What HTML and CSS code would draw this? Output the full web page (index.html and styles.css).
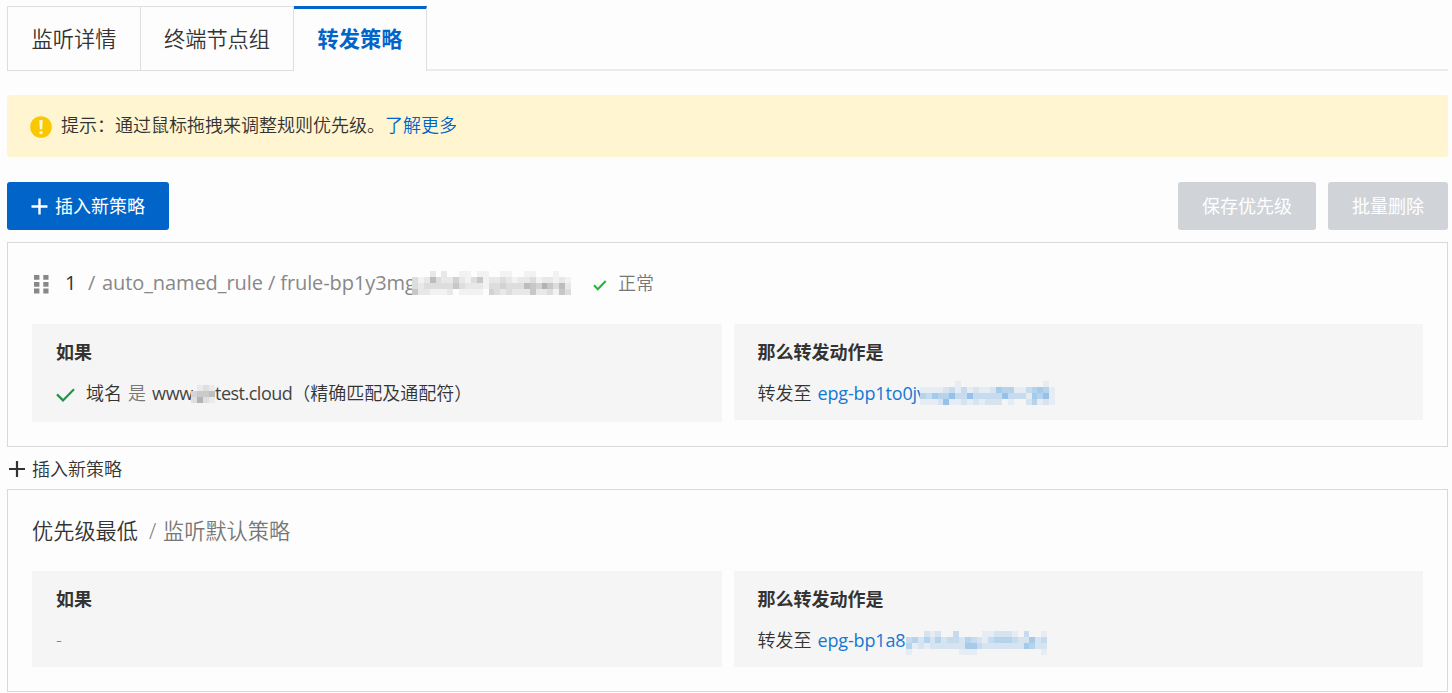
FILE: index.html
```html
<!DOCTYPE html>
<html lang="zh-CN">
<head>
<meta charset="utf-8">
<title>转发策略</title>
<link rel="stylesheet" href="styles.css">
</head>
<body>
<nav class="tabs">
  <a class="tab tab-first">监听详情</a>
  <a class="tab">终端节点组</a>
  <a class="tab tab-active">转发策略</a>
  <span class="tabs-rest"></span>
</nav>

<div class="notice">
  <svg class="notice-icon" width="22" height="22" viewBox="0 0 22 22"><circle cx="11" cy="11" r="10.8" fill="#fac800"/><path d="M9.3 4h3.4l-.5 9.2H9.8z" fill="#fff8dc"/><circle cx="11" cy="16.6" r="1.7" fill="#fff8dc"/></svg>
  <span>提示：通过鼠标拖拽来调整规则优先级。</span><a class="notice-link">了解更多</a>
</div>

<div class="toolbar">
  <button class="btn btn-primary"><svg width="17" height="17" viewBox="0 0 17 17"><path d="M8.5.5v16M.5 8.5h16" stroke="#fff" stroke-width="2.4"/></svg><span>插入新策略</span></button>
  <div class="toolbar-right">
    <button class="btn btn-off">保存优先级</button>
    <button class="btn btn-off">批量删除</button>
  </div>
</div>

<section class="card card-rule">
  <header class="card-head rule-head">
    <svg class="grip" width="15" height="19" viewBox="0 0 15 19" fill="#888"><path d="M0 0h5.4v4.8H0zM9.3 0h5.2v4.8H9.3zM0 7h5.4v4.8H0zM9.3 7h5.2v4.8H9.3zM0 13.6h5.4v4.8H0zM9.3 13.6h5.2v4.8H9.3z"/></svg>
    <span class="order">1</span>
    <span class="slash">/</span>
    <span class="rule-name">auto_named_rule / frule-bp1y3mg</span>
    <svg class="mosaic mosaic-rule" width="159" height="24" data-ink="110,110,110" data-paper="253" data-rows="000202001101100110011000100 312632242135122321223122121 323333353222133433365475362 522111201111043232225223153"></svg>
    <svg class="status-icon" width="14" height="11" viewBox="0 0 14 11"><path d="M1 5.2l3.8 4L12.7 1" fill="none" stroke="#1fb83a" stroke-width="2"/></svg>
    <span class="status">正常</span>
  </header>
  <div class="panels">
    <div class="panel panel-tall">
      <h3>如果</h3>
      <div class="line">
        <svg class="check" width="19" height="14" viewBox="0 0 19 14"><path d="M1 6.4l6 6L18 1.3" fill="none" stroke="#239447" stroke-width="2.2"/></svg>
        <span class="domain">域名</span><span class="is">是</span><span class="latin www">www</span><svg class="mosaic mosaic-domain" width="24" height="18" data-ink="100,100,100" data-paper="245" data-rows="0121 3445 2621"></svg><span class="latin test">test.cloud</span><span>（精确匹配及通配符）</span>
      </div>
    </div>
    <div class="panel">
      <h3>那么转发动作是</h3>
      <div class="line"><span>转发至</span><a class="target target-one">epg-bp1to0jv</a><svg class="mosaic mosaic-one" width="135" height="24" data-ink="35,130,215" data-paper="245" data-rows="00000010000000000000010 11112313121125441134541 43544633633333633315461 11126112121222010024121"></svg></div>
    </div>
  </div>
</section>

<div class="insert">
  <svg width="16" height="16" viewBox="0 0 16 16"><path d="M8 0v16M0 8h16" stroke="#333" stroke-width="2.2"/></svg>
  <span>插入新策略</span>
</div>

<section class="card card-default">
  <header class="card-head">
    <span class="lowest">优先级最低</span>
    <span class="default-slash">/</span>
    <span class="default-name">监听默认策略</span>
  </header>
  <div class="panels">
    <div class="panel">
      <h3>如果</h3>
      <div class="line"><span class="dash">-</span></div>
    </div>
    <div class="panel">
      <h3>那么转发动作是</h3>
      <div class="line"><span>转发至</span><a class="target target-two">epg-bp1a8</a><svg class="mosaic mosaic-two" width="141" height="24" data-ink="35,130,215" data-paper="245" data-rows="000212003000011222103001 342424233243213444322523 412122222255322222225422 100000000111000000000001"></svg></div>
    </div>
  </div>
</section>
<script src="mosaic.js"></script>
</body>
</html>
```
FILE: styles.css
```css
* { box-sizing: border-box; }
body {
  margin: 0;
  padding: 6px 4px 0 7px;
  background: #fdfdfd;
  color: #333;
  font: 350 18px/24px "Open Sans", "Noto Sans CJK SC", sans-serif;
  overflow: hidden;
}
.tabs { display: flex; height: 65px; font-size: 21.2px; }
.tab {
  width: 153px;
  border: 1px solid #dedede;
  border-left: 0;
  text-align: center;
  line-height: 64px;
}
.tab-first { width: 134px; border-left: 1px solid #dedede; }
.tab-active {
  width: 133px;
  border-top: 3px solid #0064c8;
  border-bottom: 0;
  color: #0064c8;
  font-weight: 700;
  line-height: 60px;
}
.tabs-rest { flex: 1; height: 65px; border-bottom: 2px solid #ebebeb; }
.notice {
  display: flex;
  align-items: center;
  height: 62px;
  margin-top: 24px;
  padding: 0 0 2px 23px;
  background: #fff5d0;
  border-radius: 3px;
}
.notice-icon { margin: 4px 9px 0 0; }
.notice-link { color: #0064c8; }
.toolbar {
  display: flex;
  justify-content: space-between;
  margin-top: 25px;
}
.toolbar-right { display: flex; gap: 12px; }
.btn {
  display: flex;
  align-items: center;
  height: 48px;
  padding: 0 24px;
  border: 0;
  border-radius: 3px;
  font: inherit;
  color: #fff;
}
.btn-primary { gap: 7px; background: #0064c8; font-weight: 400; }
.btn-off { background: #d0d4d9; font-weight: 400; }
.card { border: 1px solid #d9d9d9; padding: 0 24px; }
.card-rule { height: 205px; margin-top: 12px; }
.card-default { height: 203px; }
.card-head { display: flex; align-items: center; height: 81px; white-space: nowrap; }
.rule-head { padding-bottom: 2px; }
.grip { margin: 4px 16px 0 2px; }
.order { width: 23px; font-size: 20px; font-weight: 400; }
.slash { width: 14px; color: #888; font-size: 20px; font-weight: 400; }
.rule-name {
  width: 310px;
  color: #888;
  font-size: 20px;
  font-weight: 400;
  letter-spacing: -0.09px;
}
.status-icon { margin: 5px 11px 0 22px; }
.status { color: #777; }
.panels { display: flex; gap: 12px; align-items: flex-start; }
.panel { flex: 1; height: 96px; padding: 16px 24px 0; background: #f5f5f5; }
.panel-tall { height: 98px; }
.panel h3 { margin: 0; font-size: 18px; font-weight: 700; line-height: 24px; }
.line { display: flex; align-items: center; height: 24px; margin-top: 17px; white-space: nowrap; }
.check { margin: 4px 11px 0 0; }
.is { margin: 0 6px; color: #777; }
.latin { color: #444; font-weight: 400; letter-spacing: -0.5px; }
.www { width: 39px; letter-spacing: -0.3px; }
.target {
  margin-left: 6px;
  color: #1478d2;
  font-weight: 400;
  letter-spacing: -0.15px;
}
.target-one { width: 102px; }
.target-two { width: 88px; }
.mosaic { flex: none; display: block; }
.mosaic-rule { margin-top: 1px; }
.mosaic-domain { margin-top: 2px; }
.mosaic-two { margin-top: 5px; }
.insert { display: flex; align-items: center; gap: 7px; height: 24px; margin: 10px 0 8px 2px; }
.lowest { width: 117px; font-size: 21.2px; }
.default-slash { width: 14px; color: #777; font-size: 21.2px; }
.default-name { color: #777; font-size: 21.2px; }
.dash { color: #777; }
```
FILE: mosaic.js
```js
// Draws redaction blocks: each digit is the ink strength of one cell.
document.querySelectorAll('.mosaic').forEach(function (svg) {
  var rows = svg.dataset.rows.split(' ');
  var w = svg.getAttribute('width') / rows[0].length;
  var paper = Number(svg.dataset.paper);
  var ink = svg.dataset.ink.split(',').map(Number);
  rows.forEach(function (row, y) {
    row.split('').forEach(function (level, x) {
      if (level === '0') return;
      var t = level * 0.075;
      var rgb = ink.map(function (c) { return Math.round(paper + (c - paper) * t); });
      var cell = document.createElementNS('http://www.w3.org/2000/svg', 'rect');
      cell.setAttribute('x', x * w);
      cell.setAttribute('y', y * 6);
      cell.setAttribute('width', w);
      cell.setAttribute('height', 6);
      cell.setAttribute('shape-rendering', 'crispEdges');
      cell.setAttribute('fill', 'rgb(' + rgb.join(',') + ')');
      svg.appendChild(cell);
    });
  });
});
```
